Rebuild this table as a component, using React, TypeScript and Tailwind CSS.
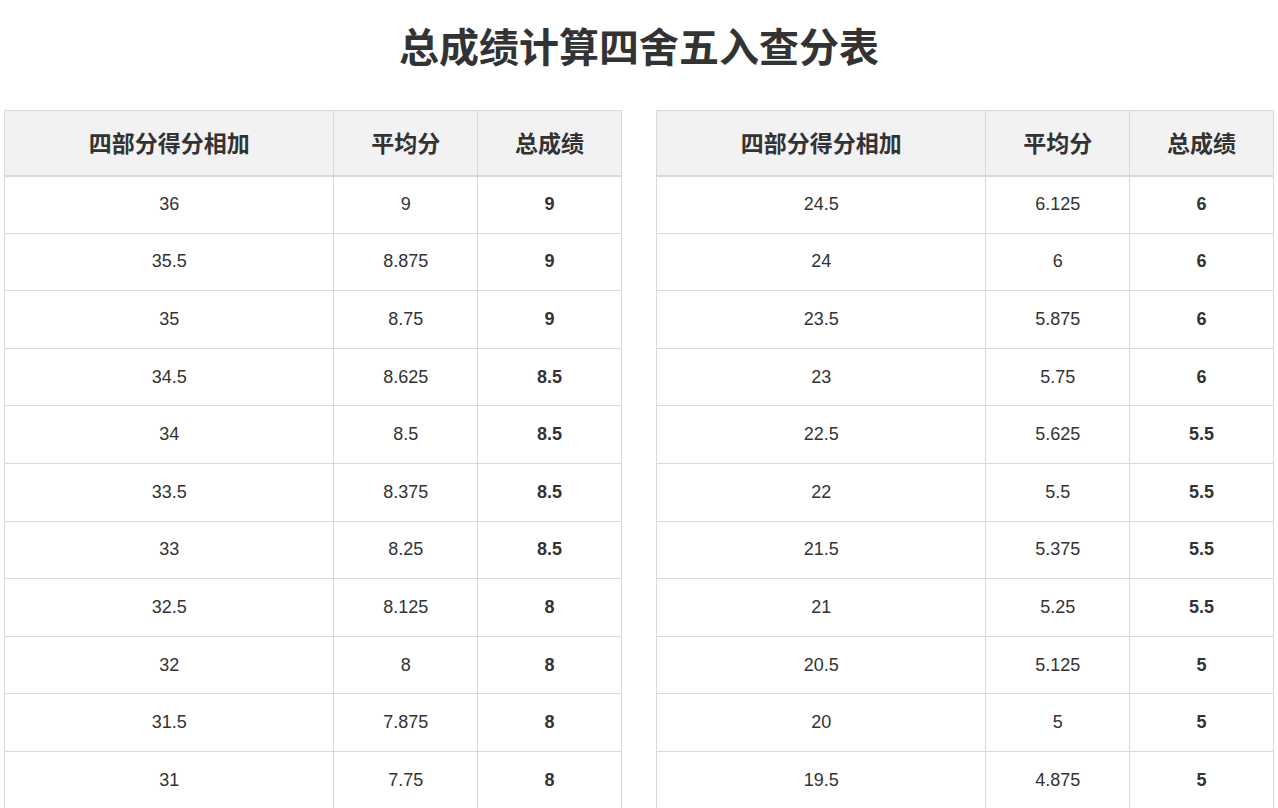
import React from 'react';

interface Row {
  sum: number;
  avg: number;
  total: number;
}

function makeRows(start: number, count: number): Row[] {
  const rows: Row[] = [];
  for (let i = 0; i < count; i++) {
    const sum = start - i * 0.5;
    const avg = sum / 4;
    const total = Math.floor(avg * 2 + 0.5) / 2;
    rows.push({ sum, avg, total });
  }
  return rows;
}

function ScoreTable({ rows }: { rows: Row[] }) {
  return (
    <table className="w-full border-collapse table-fixed border border-[#d9d9d9]">
      <colgroup>
        <col className="w-[53.4%]" />
        <col className="w-[23.3%]" />
        <col className="w-[23.3%]" />
      </colgroup>
      <thead>
        <tr className="h-[65px] bg-[#f2f2f2]">
          {['四部分得分相加', '平均分', '总成绩'].map((h) => (
            <th
              key={h}
              className="border border-[#d9d9d9] border-b-2 pt-[3px] text-[23px] font-bold text-[#333333] text-center"
            >
              {h}
            </th>
          ))}
        </tr>
      </thead>
      <tbody>
        {rows.map((r) => (
          <tr key={r.sum} className="h-[57.6px]">
            <td className="border border-[#d9d9d9] text-center text-[18px] text-[#333333]">{r.sum}</td>
            <td className="border border-[#d9d9d9] text-center text-[18px] text-[#333333]">{r.avg}</td>
            <td className="border border-[#d9d9d9] text-center text-[18px] font-bold text-[#333333]">
              {r.total}
            </td>
          </tr>
        ))}
      </tbody>
    </table>
  );
}

export default function App() {
  return (
    <div
      className="h-[808px] overflow-hidden bg-white text-[#333333]"
      style={{ fontFamily: '"Liberation Sans", Arial, "Noto Sans CJK SC", sans-serif' }}
    >
      <h1 className="pt-[24px] h-[72px] text-center text-[40px] leading-[48px] font-bold text-[#333333]">
        总成绩计算四舍五入查分表
      </h1>
      <div className="flex gap-[34px] px-[4px] pt-[38px]">
        <div className="flex-1">
          <ScoreTable rows={makeRows(36, 11)} />
        </div>
        <div className="flex-1">
          <ScoreTable rows={makeRows(24.5, 11)} />
        </div>
      </div>
    </div>
  );
}
